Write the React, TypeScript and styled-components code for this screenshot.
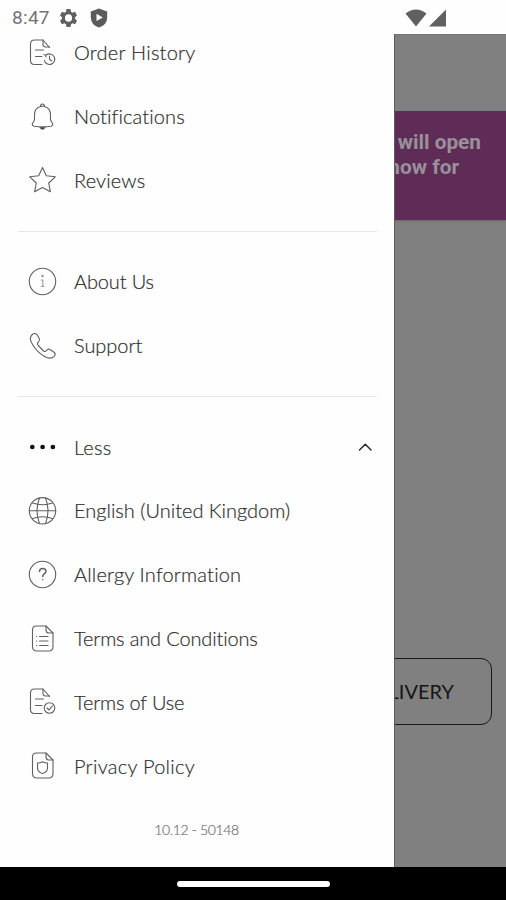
import React from "react";
import styled, { createGlobalStyle } from "styled-components";

const GlobalStyle = createGlobalStyle`
  * { box-sizing: border-box; }
  body { margin: 0; background: #fff; font-family: Lato, sans-serif; }
`;

const Screen = styled.div`
  display: flex;
  flex-direction: column;
  width: 506px;
  height: 900px;
  overflow: hidden;
  background: #fefefe;
`;

const StatusBar = styled.header`
  display: flex;
  flex: none;
  align-items: center;
  height: 34px;
  padding: 1px 59px 0 12px;
  color: #606060;
`;

const Clock = styled.span`
  width: 48px;
  font: 400 19px/22px Roboto, sans-serif;
  letter-spacing: 0.3px;
  color: #747474;
`;

const StatusIcons = styled.div<{ $end?: boolean }>`
  display: flex;
  align-items: center;
  gap: ${(p) => (p.$end ? 2 : 13)}px;
  margin-left: ${(p) => (p.$end ? "auto" : "0")};
`;

const Body = styled.div`
  display: flex;
  flex: 1;
  min-height: 0;
`;

const Drawer = styled.nav`
  flex: none;
  width: 394px;
  overflow: hidden;
  background: #fefefe;
`;

const MenuList = styled.div`
  display: flex;
  flex-direction: column;
  margin-top: -13px;
`;

const MenuRow = styled.a`
  display: flex;
  align-items: center;
  height: 63.8px;
  padding: 0 21px 0 28px;
`;

const IconBox = styled.span`
  display: flex;
  flex: none;
  width: 29px;
  height: 30px;
  margin-right: 17px;
`;

const Label = styled.span<{ $spacing: number }>`
  flex: none;
  margin-top: -1.4px;
  font-size: 20px;
  font-weight: 300;
  line-height: 24px;
  letter-spacing: ${(p) => p.$spacing}px;
  font-variant-ligatures: none;
  white-space: nowrap;
  color: #303030;
  -webkit-text-stroke: 0.2px #303030;
`;

const Chevron = styled.span`
  display: flex;
  margin-left: auto;
`;

const Divider = styled.hr`
  width: 359px;
  height: 1px;
  margin: 18.4px 0 18.3px 18px;
  border: 0;
  background: #e6e6e6;
`;

const Version = styled.p`
  margin: 23px 1px 0 0;
  text-align: center;
  font-size: 14px;
  font-weight: 300;
  line-height: 18px;
  letter-spacing: -0.35px;
  color: #707070;
  -webkit-text-stroke: 0.2px #707070;
`;

const Backdrop = styled.main`
  display: flex;
  flex: 1;
  flex-direction: column;
  min-width: 0;
  overflow: hidden;
  border-left: 1px solid #5c5c5c;
  border-top: 1px solid #737373;
  background: #808080;
`;

const Banner = styled.section`
  display: flex;
  flex: none;
  flex-direction: column;
  align-items: flex-end;
  height: 109px;
  margin-top: 76px;
  padding: 19px 25px 0 0;
  background: #5f2c58;
  box-shadow: 0 1px 2px #6c626a;
`;

const BannerLine = styled.span<{ $inset?: number }>`
  margin-right: ${(p) => p.$inset ?? 0}px;
  font: 700 20.8px/25px Roboto, sans-serif;
  white-space: nowrap;
  color: #999199;
`;

const DeliveryButton = styled.button`
  display: flex;
  flex: none;
  align-items: center;
  justify-content: flex-end;
  width: 200px;
  height: 67px;
  margin: auto 14px 142px -103px;
  padding: 0 37px 1px 0;
  border: 1.5px solid #191919;
  border-radius: 11px;
  background: transparent;
  font: 400 20px/24px Lato, sans-serif;
  color: #151515;
`;

const NavigationBar = styled.footer`
  display: flex;
  flex: none;
  align-items: center;
  justify-content: center;
  height: 33px;
  background: #000;
`;

const HomeHandle = styled.span`
  width: 153px;
  height: 6px;
  border-radius: 3px;
  background: #fff;
`;

const Drawing = styled.svg`
  display: block;
  flex: none;
  overflow: visible;
  fill: none;
  stroke: #606060;
  stroke-width: 1.1;
  stroke-linecap: round;
  stroke-linejoin: round;
`;

const pageBadge = (
  <>
    <path d="M14 26.500H6.500Q2.500 26.500 2.500 22.500V6Q2.500 2 6.500 2H15L21.500 9.500" />
    <path d="M15 2V6.500Q15 9 17.500 9H21.500M7.500 12H15.500M7.500 18.500H14" />
  </>
);

const page = (
  <>
    <path d="M8.500 2H18L25 9V22.500Q25 27 20.500 27H9Q4.500 27 4.500 22.500V6Q4.500 2 8.500 2Z" />
    <path d="M18 2V6Q18 9 21 9H25" />
  </>
);

const icons: Record<string, React.ReactNode> = {
  history: (
    <>
      {pageBadge}
      <path d="M18 17.200A5.300 5.300 0 1 1 16.300 22.200M21.500 18V21.300L23.800 23M15.800 16.800L18.300 17L17.800 19" />
    </>
  ),
  bell: (
    <>
      <path d="M12.500 4.500Q12.500 2 14.500 2T16.500 4.500C20.500 5.500 22.500 9 22.500 13V18L24.800 22Q25 23.800 23 24.200Q14.500 25.500 6 24.200Q4 23.800 4.200 22L6.500 18V13C6.500 9 8.500 5.500 12.500 4.500ZM12.500 4.500Q14.500 4 16.500 4.500" />
      <path d="M12 25.500Q14.500 29 17 25.500Z" fill="#222" />
    </>
  ),
  star: <path d="M14.500 2.500L18.300 10.700L27.300 11.800L20.700 18L22.400 26.800L14.500 22.500L6.600 26.800L8.300 18L1.700 11.800L10.700 10.700Z" />,
  info: (
    <>
      <circle cx="14.500" cy="14.500" r="13.200" />
      <path d="M13.300 13H14.800V19.500M13.300 19.500H16" stroke="#999" />
      <circle cx="14.500" cy="9" r=".7" fill="#999" stroke="#999" />
    </>
  ),
  phone: (
    <path d="M4.300 3.500Q7 1.500 9 3.700L11.300 7.500Q12.300 9.500 10.400 11Q8.700 12.500 10.200 14.500L15.500 20Q17.300 21.200 18.500 19.500Q20 17.500 22 18.500L26 21.200Q28.300 23 26.200 25.300C23.500 28 20.500 27.800 16.500 25.500Q9 21 4.500 13.500C2 9.500 1.500 6 4.300 3.500Z" />
  ),
  dots: (
    <g fill="#111" stroke="none">
      <circle cx="4.300" cy="15" r="2.350" />
      <circle cx="14.600" cy="15" r="2.350" />
      <circle cx="24.900" cy="15" r="2.350" />
    </g>
  ),
  globe: (
    <>
      <circle cx="14.500" cy="14.800" r="13.200" />
      <path d="M1.300 14.800H27.700M4.500 7Q14.500 10.500 24.500 7M4.500 22.600Q14.500 19 24.500 22.600M11.500 2Q6.500 14.800 11.500 27.600M17.500 2Q22.500 14.800 17.500 27.600" />
    </>
  ),
  question: (
    <>
      <circle cx="14.500" cy="14.500" r="13.200" />
      <path d="M11.500 11.500C11.500 7.500 18 7.500 18 11.300C18 13.500 14.700 13.700 14.700 16.500" strokeWidth="1.500" />
      <circle cx="14.700" cy="19.800" r=".8" fill="#666" stroke="none" />
    </>
  ),
  terms: (
    <>
      {page}
      <path d="M11.500 12.500H20M11.500 17H20M11.500 21.500H20M8.500 12.500H8.700M8.500 17H8.700M8.500 21.500H8.700" />
    </>
  ),
  approved: (
    <>
      {pageBadge}
      <circle cx="21.500" cy="21" r="5.300" />
      <path d="M19 21L21 23L24.200 19.200" />
    </>
  ),
  privacy: (
    <>
      {page}
      <path d="M9.500 12Q12.500 12 14.500 10.700Q16.500 12 19.500 12V17Q19.500 21 14.500 22.500Q9.500 21 9.500 17Z" />
    </>
  ),
};

function Item({ icon, text, spacing = 0, open }: { icon: string; text: string; spacing?: number; open?: boolean }) {
  return (
    <MenuRow>
      <IconBox>
        <Drawing width="29" height="30" viewBox="0 0 29 30">{icons[icon]}</Drawing>
      </IconBox>
      <Label $spacing={spacing}>{text}</Label>
      {open && (
        <Chevron>
          <Drawing width="16" height="10" viewBox="0 0 16 10">
            <path d="M2.500 8L8.300 2.300L14 8" stroke="#222" strokeWidth="1.400" />
          </Drawing>
        </Chevron>
      )}
    </MenuRow>
  );
}

export default function App() {
  return (
    <>
      <GlobalStyle />
      <Screen>
        <StatusBar>
          <Clock>8:47</Clock>
          <StatusIcons>
            <svg width="17" height="18" viewBox="0 0 24 24" preserveAspectRatio="none">
              <path fill="#606060" fillRule="evenodd" d="M9.200 0H14.800L15.600 3.700L17.700 4.900L21.300 3.700L24 8.500L21.200 11V13L24 15.500L21.300 20.300L17.700 19.100L15.600 20.300L14.800 24H9.200L8.400 20.300L6.300 19.100L2.700 20.300L0 15.500L2.800 13V11L0 8.500L2.700 3.700L6.300 4.900L8.400 3.700ZM12 7A5 5 0 1 0 12 17A5 5 0 1 0 12 7Z" />
            </svg>
            <svg width="18" height="20" viewBox="0 0 18 20">
              <path fill="#5b5b5b" fillRule="evenodd" d="M9 .5L17.200 3.500V9.500Q17 17 9 19.500Q1 17 .8 9.500V3.500ZM6.500 5.800V13L12.800 9.400Z" />
            </svg>
          </StatusIcons>
          <StatusIcons $end>
            <svg width="22" height="18" viewBox="0 0 22 18">
              <path fill="#606060" d="M.5 4.500Q11-3.500 21.500 4.500L11 17.500Z" />
            </svg>
            <svg width="18" height="18" viewBox="0 0 18 18">
              <path fill="#606060" d="M0 17.500L17 .5V17.500Z" />
            </svg>
          </StatusIcons>
        </StatusBar>
        <Body>
          <Drawer>
            <MenuList>
              <Item icon="history" text="Order History" spacing={0.23} />
              <Item icon="bell" text="Notifications" spacing={0.12} />
              <Item icon="star" text="Reviews" spacing={0.14} />
              <Divider />
              <Item icon="info" text="About Us" spacing={-0.13} />
              <Item icon="phone" text="Support" spacing={-0.05} />
              <Divider />
              <Item icon="dots" text="Less" spacing={0.2} open />
              <Item icon="globe" text="English (United Kingdom)" />
              <Item icon="question" text="Allergy Information" spacing={0.18} />
              <Item icon="terms" text="Terms and Conditions" spacing={-0.15} />
              <Item icon="approved" text="Terms of Use" spacing={-0.18} />
              <Item icon="privacy" text="Privacy Policy" spacing={0.27} />
              <Version>10.12 - 50148</Version>
            </MenuList>
          </Drawer>
          <Backdrop>
            <Banner>
              <BannerLine>will open</BannerLine>
              <BannerLine $inset={22}>now for</BannerLine>
            </Banner>
            <DeliveryButton>DELIVERY</DeliveryButton>
          </Backdrop>
        </Body>
        <NavigationBar>
          <HomeHandle />
        </NavigationBar>
      </Screen>
    </>
  );
}
